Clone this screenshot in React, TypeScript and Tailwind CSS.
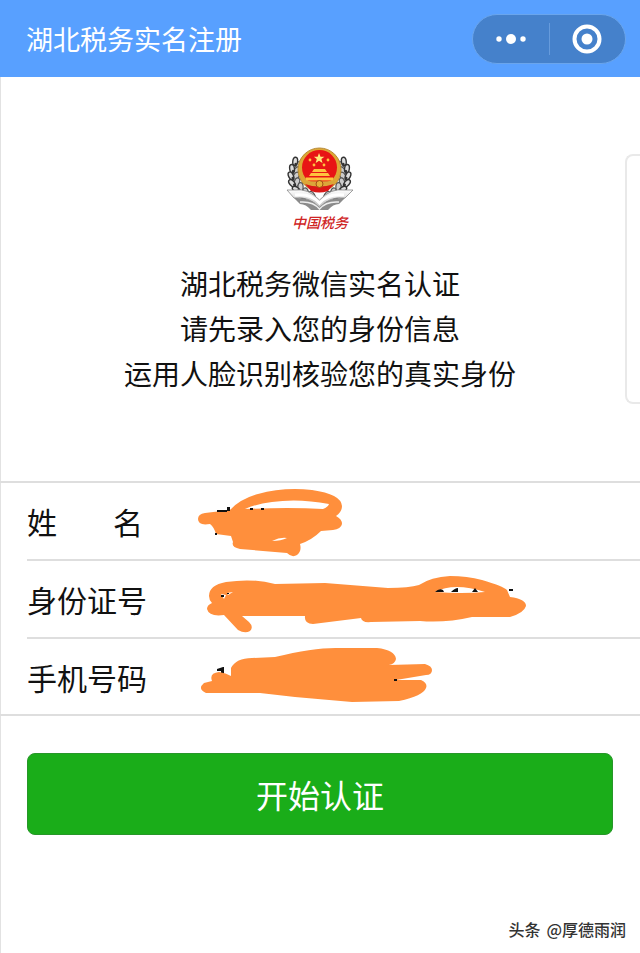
const orange = "#ff8f3c";

const rows = [
  {
    id: "name",
    label: ["姓", "名"],
    type: "text",
  },
  {
    id: "idNumber",
    label: ["身份证号"],
    type: "text",
  },
  {
    id: "phone",
    label: ["手机号码"],
    type: "tel",
  },
];

const intro = [
  "湖北税务微信实名认证",
  "请先录入您的身份信息",
  "运用人脸识别核验您的真实身份",
];

// [x, y, rotation] of the leaves on the right side, mirrored for the left
const leaves = [
  [75, 20, -35],
  [78, 27, -20],
  [79, 34, -4],
  [78, 41, 12],
  [74, 47, 28],
  [68, 53, 45],
  [61, 57, 60],
];

const Leaves = () => (
  <g>
    {leaves.map(([x, y, r], index) => (
      <g key={index} transform={`rotate(${r} ${x - 2} ${y})`}>
        <ellipse cx={x - 6} cy={y} rx="2.6" ry="4.4" fill="#ccc" stroke="#555" strokeWidth="1.2" transform={`rotate(-28 ${x - 6} ${y})`} />
        <ellipse cx={x - 1} cy={y} rx="2.4" ry="4.2" fill="#ddd" stroke="#333" strokeWidth="1.4" transform={`rotate(28 ${x - 1} ${y})`} />
        <circle cx={x - 3} cy={y + 2} r="1.4" fill="#333" />
      </g>
    ))}
  </g>
);

const Emblem = () => (
  <svg viewBox="0 0 100 70" className="h-[70px] w-[100px]" aria-hidden="true">
    <defs>
      <linearGradient id="page" x1="0" y1="0" x2="0" y2="1">
        <stop offset="0" stopColor="#fff" />
        <stop offset="1" stopColor="#bbb" />
      </linearGradient>
    </defs>
    <Leaves />
    <g transform="translate(99 0) scale(-1 1)">
      <Leaves />
    </g>
    <path d="M17 48H25Q38 46 49.500 58Q61 46 74 48H83L75 56Q59 54 49.500 66Q40 54 24 56Z" fill="url(#page)" stroke="#888" strokeWidth="0.8" />
    <path d="M24 56Q40 55 49.500 65Q59 55 75 56L69 62Q63 62 58 68H41Q36 62 30 62Z" fill="#8b8b8b" />
    <path d="M25 53Q41 51 49.500 61Q58 51 74 53" fill="none" stroke="#fff" strokeWidth="3" />
    <path d="M30 60Q43 59 49.500 67Q56 59 69 60" fill="none" stroke="#eee" strokeWidth="1.5" />
    <circle cx="49.500" cy="27.500" r="21.500" fill="#dda835" stroke="#b98a35" strokeWidth="1" />
    <circle cx="49.500" cy="25.500" r="17.500" fill="#e81515" />
    <path d="M49 11l1.500 3.700h3.900l-3 2.400 1.100 3.800-3.500-2.200-3.300 2.200 1.100-3.800-3-2.400h3.900z" fill="#ffec7a" />
    <g fill="#ffc33e">
      <circle cx="40" cy="18" r="1.400" />
      <circle cx="44" cy="23" r="1.400" />
      <circle cx="54" cy="23" r="1.400" />
      <circle cx="58" cy="18" r="1.400" />
      <path d="M44 27h11l2 3H42zM41 31h17l2 3H39zM36 35.500h27v3H36z" />
    </g>
    <path d="M33 38q16 3 33 0l-3 6q-13 4-27 0z" fill="#dba63a" />
    <path d="M35 42q14 5 29 0l-6 7q-9 3-17 0z" fill="#d91717" />
    <circle cx="49.500" cy="42" r="3.500" fill="#e6b13a" stroke="#a44c15" />
  </svg>
);

const NameScribble = () => (
  <>
    <path d="M198 519Q198 514 205 513L230 510Q240 499 258 494Q283 487 312 490Q341 494 342 506Q342 512 336 516Q342 519 342 524Q341 529 333 530L321 531Q312 540 300 544Q302 551 297 555Q292 558 287 553L240 549Q231 547 233 542L231 536L216 534Q214 527 210 524Q198 526 198 519Z" fill={orange} />
    <path d="M245 509Q256 504 272 502Q298 498 329 504Q328 507 323 509Q290 507 245 509Z" fill="#fff" />
    <path d="M272 541q8-4 15-3-6 3-15 3z" fill="#fff" />
    <path d="M217 510h10v2h-10zM227 507h3v4h-3zM250 508h3v2h-3zM261 508h3v2h-3zM215 533h2v2h-2z" fill="#111" />
  </>
);

const IdScribble = () => (
  <>
    <path d="M209 596Q209 585 226 582Q253 578 275 584L325 583L388 588Q409 588 419 585Q431 577 450 576Q467 576 482 580Q503 586 507 590L510 597Q526 599 526 606Q524 613 510 617L472 617Q446 623 420 621L371 622Q362 623 361 618L313 624Q304 624 305 616H242L249 622Q254 627 250 631Q245 634 238 630L224 615Q209 617 207 609Q207 605 212 603Q209 600 209 596Z" fill={orange} />
    <path d="M435 592Q454 582 485 592Q462 594 435 592Z" fill="#fff" />
    <path d="M435 592q4-4 8-2l1 2zM451 592q4-4 7-4v4zM472 592l3-4 3 4zM509 589h4v2h-4z" fill="#111" />
    <path d="M221 594l5 1-2 4zM227 593l6-1-5 3z" fill="#fff" />
    <path d="M221 595h3v2h-3zM227 593h2v1h-2z" fill="#111" />
  </>
);

const PhoneScribble = () => (
  <>
    <path d="M217 669l6-2h1v9h-3v-5h-4z" fill="#111" />
    <path d="M204 683L212 681Q209 673 219 672Q226 673 231 676V668Q236 658 252 658L275 657Q316 647 340 648L377 648Q395 650 396 659Q395 664 389 665L425 664Q432 666 432 670Q432 675 426 675L396 680L421 680Q428 683 426 688Q423 696 399 701L352 702L295 697L260 693L206 693Q197 689 204 683Z" fill={orange} />
    <path d="M394 679h3v2h-3z" fill="#111" />
  </>
);

const App = () => {
  return (
    <div className="min-h-screen bg-white font-['Noto_Sans_CJK_SC',sans-serif] text-[#111] border-l border-[#e2e2e2] relative">
      <header className="-ml-px flex h-[77px] items-center justify-between bg-[#58a0ff] pl-[26px] pr-[14px] pt-px">
        <h1 className="text-[27px] leading-10 text-white">湖北税务实名注册</h1>
        <div className="flex h-[50px] w-[154px] items-center rounded-full border border-[#6aa5ec] bg-[#4581cb]">
          <button type="button" aria-label="更多" className="flex h-full flex-1 items-center justify-center">
            <svg viewBox="0 0 32 12" className="h-3 w-8" fill="#fff">
              <circle cx="4" cy="6" r="2.700" />
              <circle cx="16" cy="6" r="5" />
              <circle cx="28" cy="6" r="2.700" />
            </svg>
          </button>
          <span className="h-8 w-px bg-[#669bdc]" />
          <button type="button" aria-label="关闭" className="flex h-full flex-1 items-center justify-center">
            <svg viewBox="0 0 30 30" className="size-[30px]">
              <circle cx="15" cy="15" r="12.500" fill="none" stroke="#fff" strokeWidth="4" />
              <circle cx="15" cy="15" r="5.500" fill="#fff" />
            </svg>
          </button>
        </div>
      </header>

      <div className="absolute right-0 top-[154px] h-[250px] w-[15px] rounded-l-lg border-2 border-r-0 border-[#e9e9e9] bg-white" />

      <main className="-ml-px">
        <section className="flex flex-col items-center pt-[65px]">
          <Emblem />
          <p className="text-[14px] leading-5 font-medium italic text-[#cf2525]">
            中国税务
          </p>
          <div className="mt-[29px] text-center text-[28px] leading-[45px]">
            {intro.map((line) => (
              <p key={line}>{line}</p>
            ))}
          </div>
        </section>

        <form>
          <div className="relative mt-[85px] border-y-2 border-[#dedede]">
            <div>
              {rows.map((row) => (
                <div key={row.id} className="ml-[27px] flex h-[78px] items-center border-b-2 border-[#dedede] last:h-[75px] last:border-b-0">
                  <label htmlFor={row.id} className="flex w-[170px] gap-14 text-[30px] leading-10">
                    {row.label.map((part) => (
                      <span key={part}>{part}</span>
                    ))}
                  </label>
                  <input id={row.id} type={row.type} className="h-full min-w-0 flex-1 bg-transparent text-[30px] outline-none" />
                </div>
              ))}
            </div>
            <svg viewBox="0 481 640 236" className="pointer-events-none absolute left-0 -top-0.5 h-[236px] w-[640px]" aria-hidden="true">
              <NameScribble />
              <IdScribble />
              <PhoneScribble />
            </svg>
          </div>
          <div className="px-[27px] pt-[37px]">
            <button type="submit" className="h-[82px] w-full rounded-lg border border-[#279729] bg-[#1aad19] text-[32px] leading-10 text-white">
              开始认证
            </button>
          </div>
        </form>
      </main>

      <footer className="absolute bottom-2.5 right-[14px] flex gap-1.5 text-[16px] leading-7 font-medium text-[#333]">
        <span>头条</span>
        <span>@厚德雨润</span>
      </footer>
    </div>
  );
};

export default App;
